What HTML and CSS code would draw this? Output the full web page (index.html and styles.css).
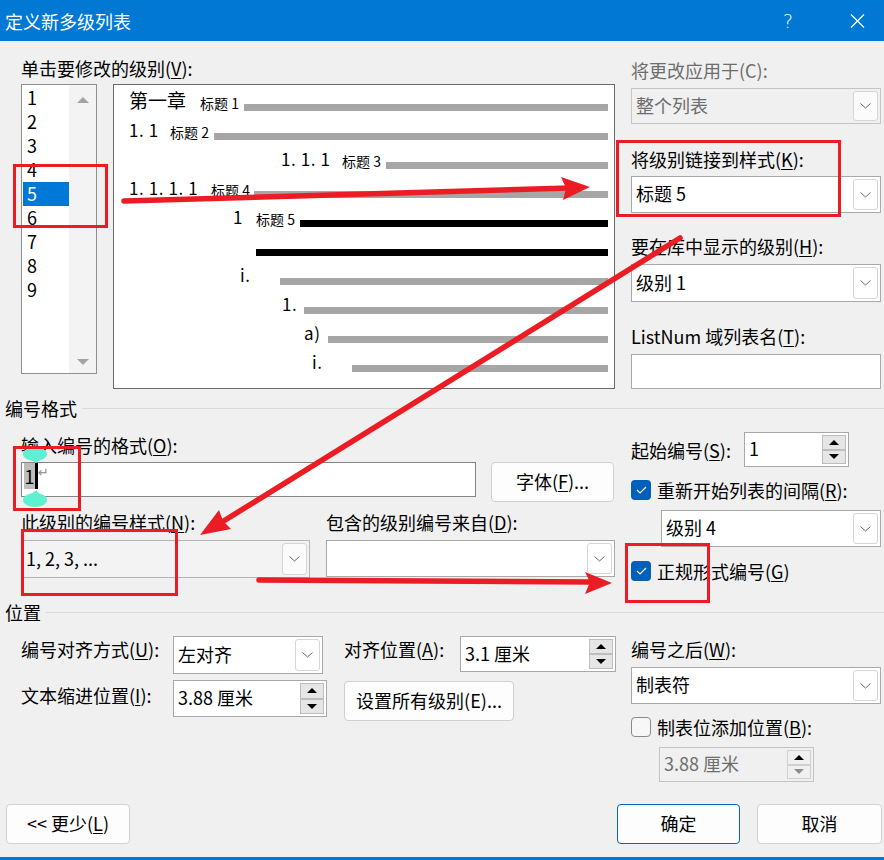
FILE: index.html
```html
<!DOCTYPE html>
<html lang="zh-CN">
<head>
<meta charset="utf-8">
<title>定义新多级列表</title>
<link rel="stylesheet" href="styles.css">
</head>
<body>
<div class="titlebar">
  <span class="t-title">定义新多级列表</span>
  <span class="t-help">?</span>
  <svg class="t-close" width="15" height="14" viewBox="0 0 15 14"><path d="M1 0.5 L14 13.5 M14 0.5 L1 13.5" stroke="#fff" stroke-width="1.2" fill="none"/></svg>
</div>

<div class="top">
  <div class="top-left">
    <div class="lbl lbl-levels">单击要修改的级别(<u>V</u>):</div>
    <div class="lists">
      <div class="levels">
        <div class="items">
          <div class="item">1</div>
          <div class="item">2</div>
          <div class="item">3</div>
          <div class="item">4</div>
          <div class="item sel">5</div>
          <div class="item">6</div>
          <div class="item">7</div>
          <div class="item">8</div>
          <div class="item">9</div>
        </div>
        <div class="vscroll"><span class="up"></span><span class="down"></span></div>
      </div>
      <div class="preview">
        <div class="prow r1"><span class="num big w1">第一章</span><span class="lab w44">标题 1</span><span class="bar"></span></div>
        <div class="prow r2"><span class="num w2">1. 1</span><span class="lab w44">标题 2</span><span class="bar"></span></div>
        <div class="prow r3"><span class="num w3">1. 1. 1</span><span class="lab w44">标题 3</span><span class="bar"></span></div>
        <div class="prow r4"><span class="num w4">1. 1. 1. 1</span><span class="lab w43">标题 4</span><span class="bar"></span></div>
        <div class="prow r5"><span class="num w5">1</span><span class="lab w44">标题 5</span><span class="bar dark"></span></div>
        <div class="prow r6"><span class="bar dark"></span></div>
        <div class="prow r7"><span class="num w7">i.</span><span class="bar"></span></div>
        <div class="prow r8"><span class="num w8">1.</span><span class="bar"></span></div>
        <div class="prow r9"><span class="num w9">a)</span><span class="bar"></span></div>
        <div class="prow r10"><span class="num w7">i.</span><span class="bar"></span></div>
      </div>
    </div>
  </div>
  <div class="top-right">
    <div class="lbl dis tr1">将更改应用于(C):</div>
    <div class="combo disabled tr2"><span class="v">整个列表</span><span class="dd"><svg width="11" height="6" viewBox="0 0 11 6"><path d="M0.5 0.5 L5.5 5 L10.5 0.5" fill="none" stroke="#666" stroke-width="1"/></svg></span></div>
    <div class="lbl tr3">将级别链接到样式(<u>K</u>):</div>
    <div class="combo tr4"><span class="v">标题 5</span><span class="dd"><svg width="11" height="6" viewBox="0 0 11 6"><path d="M0.5 0.5 L5.5 5 L10.5 0.5" fill="none" stroke="#666" stroke-width="1"/></svg></span></div>
    <div class="lbl tr5">要在库中显示的级别(<u>H</u>):</div>
    <div class="combo tr6"><span class="v">级别 1</span><span class="dd"><svg width="11" height="6" viewBox="0 0 11 6"><path d="M0.5 0.5 L5.5 5 L10.5 0.5" fill="none" stroke="#666" stroke-width="1"/></svg></span></div>
    <div class="lbl tr7">ListNum 域列表名(<u>T</u>):</div>
    <div class="textbox tr8"></div>
  </div>
</div>

<div class="sec"><span>编号格式</span></div>

<div class="fmt">
  <div class="fmt-left">
    <div class="lbl fl1">输入编号的格式(<u>O</u>):</div>
    <div class="row-input">
      <div class="fmtbox"><span class="hl">1</span><span class="caret"></span><span class="ret">↵</span></div>
      <div class="btn btn-font">字体(<u>F</u>)...</div>
    </div>
    <div class="row-labels">
      <div class="lbl lw">此级别的编号样式(<u>N</u>):</div>
      <div class="lbl">包含的级别编号来自(<u>D</u>):</div>
    </div>
    <div class="row-combos">
      <div class="combo plain c-style"><span class="v">1, 2, 3, ...</span><span class="dd"><svg width="11" height="6" viewBox="0 0 11 6"><path d="M0.5 0.5 L5.5 5 L10.5 0.5" fill="none" stroke="#666" stroke-width="1"/></svg></span></div>
      <div class="combo c-from"><span class="v"></span><span class="dd"><svg width="11" height="6" viewBox="0 0 11 6"><path d="M0.5 0.5 L5.5 5 L10.5 0.5" fill="none" stroke="#666" stroke-width="1"/></svg></span></div>
    </div>
  </div>
  <div class="fmt-right">
    <div class="startrow">
      <div class="lbl sl">起始编号(<u>S</u>):</div>
      <div class="spin sp-start"><span class="v">1</span><span class="arr"><span><i class="tu"></i></span><span><i class="td"></i></span></span></div>
    </div>
    <div class="cbrow cb1"><span class="cb"><svg width="11" height="8" viewBox="0 0 11 8"><path d="M1 4 L4 7 L10 1" fill="none" stroke="#fff" stroke-width="1.2"/></svg></span><span class="lbl">重新开始列表的间隔(<u>R</u>):</span></div>
    <div class="combo c-lvl"><span class="v">级别 4</span><span class="dd"><svg width="11" height="6" viewBox="0 0 11 6"><path d="M0.5 0.5 L5.5 5 L10.5 0.5" fill="none" stroke="#666" stroke-width="1"/></svg></span></div>
    <div class="cbrow cb2"><span class="cb"><svg width="11" height="8" viewBox="0 0 11 8"><path d="M1 4 L4 7 L10 1" fill="none" stroke="#fff" stroke-width="1.2"/></svg></span><span class="lbl">正规形式编号(<u>G</u>)</span></div>
  </div>
</div>

<div class="sec"><span>位置</span></div>

<div class="pos">
  <div class="pos-left">
    <div class="prow1">
      <div class="lbl plabel">编号对齐方式(<u>U</u>):</div>
      <div class="combo c-align"><span class="v">左对齐</span><span class="dd"><svg width="11" height="6" viewBox="0 0 11 6"><path d="M0.5 0.5 L5.5 5 L10.5 0.5" fill="none" stroke="#666" stroke-width="1"/></svg></span></div>
      <div class="lbl plabel2">对齐位置(<u>A</u>):</div>
      <div class="spin sp-at"><span class="v">3.1 厘米</span><span class="arr"><span><i class="tu"></i></span><span><i class="td"></i></span></span></div>
    </div>
    <div class="prow2">
      <div class="lbl plabel">文本缩进位置(<u>I</u>):</div>
      <div class="spin sp-indent"><span class="v">3.88 厘米</span><span class="arr"><span><i class="tu"></i></span><span><i class="td"></i></span></span></div>
      <div class="btn btn-all">设置所有级别(E)...</div>
    </div>
  </div>
  <div class="pos-right">
    <div class="lbl pr1">编号之后(<u>W</u>):</div>
    <div class="combo c-after"><span class="v">制表符</span><span class="dd"><svg width="11" height="6" viewBox="0 0 11 6"><path d="M0.5 0.5 L5.5 5 L10.5 0.5" fill="none" stroke="#666" stroke-width="1"/></svg></span></div>
    <div class="cbrow cb3"><span class="cb off"></span><span class="lbl">制表位添加位置(<u>B</u>):</span></div>
    <div class="spin disabled sp-tab"><span class="v">3.88 厘米</span><span class="arr"><span><i class="tu"></i></span><span><i class="td grey"></i></span></span></div>
  </div>
</div>

<div class="footer">
  <div class="btn btn-less">&lt;&lt; 更少(<u>L</u>)</div>
  <div class="spacer"></div>
  <div class="btn btn-ok">确定</div>
  <div class="btn btn-cancel">取消</div>
</div>
<div class="edge"></div>

<svg class="overlay" width="884" height="860" viewBox="0 0 884 860">
  <g fill="#5ef0d0">
    <ellipse cx="35" cy="454" rx="12" ry="7"/>
    <polygon points="27,457 43,457 36,463"/>
    <ellipse cx="35" cy="500" rx="12" ry="7"/>
    <polygon points="28,497 42,497 36,490"/>
  </g>
  <g fill="none" stroke="#ec1c24" stroke-width="3">
    <rect x="14.5" y="165.5" width="92" height="61"/>
    <rect x="617.5" y="141.5" width="222" height="74"/>
    <rect x="14.5" y="447.5" width="65" height="62"/>
    <rect x="22.5" y="530.5" width="154" height="64"/>
    <rect x="626.5" y="544.5" width="82" height="57"/>
  </g>
  <g stroke="#ec1c24" stroke-width="5.5" stroke-linecap="round">
    <line x1="124" y1="201" x2="570" y2="188"/>
    <line x1="680" y1="238" x2="222" y2="522"/>
    <line x1="259" y1="580" x2="592" y2="582"/>
  </g>
  <g fill="#ec1c24">
    <polygon points="590,187 561,177 566,188 563,200"/>
    <polygon points="200,535 219,510 223,521 231,529"/>
    <polygon points="612,583 585,572 590,582 585,594"/>
  </g>
</svg>
</body>
</html>
```

FILE: styles.css
```css
* { box-sizing: border-box; margin: 0; padding: 0; }
html, body { width: 884px; height: 860px; }
body {
  background: #f0f0f0;
  font-family: "Noto Sans CJK SC", "Noto Sans", sans-serif;
  font-size: 18px;
  color: #000;
  position: relative;
  overflow: hidden;
}
u { text-decoration: underline; text-underline-offset: 2px; text-decoration-thickness: 1px; }
i { display: block; }

/* title bar */
.titlebar { height: 41px; background: #0078d4; color: #fff; display: flex; align-items: center; }
.t-title { flex: 1; padding-left: 5px; font-size: 18px; line-height: 24px; }
.t-help { width: 20px; text-align: center; font-size: 19px; line-height: 24px; font-family: "DejaVu Sans", sans-serif; font-weight: 300; }
.t-close { margin-left: 52px; margin-right: 19px; }

.lbl { height: 20px; line-height: 20px; white-space: nowrap; }
.dis { color: #6d6d6d; }

/* top */
.top { display: flex; height: 357px; padding-left: 21px; }
.top-left { width: 610px; }
.lbl-levels { margin-top: 17px; }
.lists { display: flex; gap: 16px; margin-top: 6px; }
.levels { width: 76px; height: 290px; background: #fff; border: 1px solid #8f8f8f; display: flex; }
.items { width: 47px; padding: 1px 0 0 1px; }
.item { height: 24px; line-height: 23px; padding-left: 4px; font-size: 18px; }
.item.sel { background: #0078d7; color: #fff; }
.vscroll { flex: 1; background: #f3f3f3; display: flex; flex-direction: column; justify-content: space-between; align-items: center; padding: 12px 0 8px; }
.up { width: 0; height: 0; border-left: 6px solid transparent; border-right: 6px solid transparent; border-bottom: 6px solid #a3a3a3; }
.down { width: 0; height: 0; border-left: 6px solid transparent; border-right: 6px solid transparent; border-top: 6px solid #a3a3a3; }

.preview { width: 502px; height: 305px; background: #fff; border: 1px solid #6b6b6b; padding-right: 6px; }
.prow { display: flex; align-items: flex-start; height: 29px; }
.num { margin-top: 6px; line-height: 20px; font-size: 17px; letter-spacing: 0.6px; white-space: nowrap; flex: none; }
.num.big { font-size: 19px; margin-top: 5px; letter-spacing: 0; }
.lab { font-size: 14px; line-height: 14px; margin-top: 11px; flex: none; white-space: nowrap; }
.bar { flex: 1; height: 7px; margin-top: 19px; background: #a6a6a6; }
.bar.dark { background: #000; }
.r1, .r2, .r4 { padding-left: 15px; }
.r3 { padding-left: 167px; }
.r5 { padding-left: 119px; }
.r6 { padding-left: 142px; }
.r7 { padding-left: 126px; }
.r8 { padding-left: 168px; }
.r9 { padding-left: 190px; }
.r10 { padding-left: 198px; }
.w1 { width: 71px; }
.w2 { width: 41px; }
.w3 { width: 61px; }
.w4 { width: 82px; }
.w5 { width: 23px; }
.w7 { width: 40px; }
.w8 { width: 22px; }
.w9 { width: 24px; }
.w43 { width: 43px; }
.w44 { width: 44px; }

.top-right { width: 250px; }
.tr1 { margin-top: 19px; }
.tr2 { margin-top: 8px; height: 36px; }
.tr3 { margin-top: 25px; }
.tr4 { margin-top: 7px; height: 37px; }
.tr5 { margin-top: 23px; }
.tr6 { margin-top: 8px; height: 38px; }
.tr7 { margin-top: 24px; }
.tr8 { margin-top: 8px; height: 35px; }

/* controls */
.combo { display: flex; align-items: center; background: #fff; border: 1px solid #a9a9a9; }
.combo .v { flex: 1; padding-left: 4px; padding-bottom: 3px; line-height: 20px; white-space: nowrap; }
.combo .dd { width: 25px; align-self: stretch; margin: 2px 2px 2px 0; border: 1px solid #d5d5d5; border-radius: 3px; background: #fff; display: flex; align-items: center; justify-content: center; }
.combo.disabled { background: #f0f0f0; border-color: #c4c4c4; color: #6d6d6d; }
.combo.disabled .dd { background: #fbfbfb; }
.combo.plain { background: #f3f3f3; border-color: #b5b5b5; }
.combo.plain .dd { background: #fbfbfb; }
.textbox { background: #fff; border: 1px solid #a9a9a9; }

.spin { display: flex; background: #fff; border: 1px solid #a9a9a9; }
.spin .v { flex: 1; padding-left: 4px; padding-bottom: 3px; display: flex; align-items: center; white-space: nowrap; line-height: 20px; }
.spin .arr { width: 24px; margin: 2px 2px 2px 0; display: flex; flex-direction: column; }
.spin .arr > span { flex: 1; background: #e6e6e6; border: 1px solid #bdbdbd; display: flex; align-items: center; justify-content: center; }
.tu { width: 0; height: 0; border-left: 5px solid transparent; border-right: 5px solid transparent; border-bottom: 5px solid #000; }
.td { width: 0; height: 0; border-left: 5px solid transparent; border-right: 5px solid transparent; border-top: 5px solid #000; }
.td.grey { border-top-color: #8c8c8c; }
.spin.disabled { background: #f0f0f0; border-color: #c4c4c4; color: #6d6d6d; }
.spin.disabled .arr > span { background: #f0f0f0; border-color: #d0d0d0; }

.btn { background: #fdfdfd; border: 1px solid #d0d0d0; border-radius: 4px; display: flex; align-items: center; justify-content: center; line-height: 20px; padding-bottom: 2px; white-space: nowrap; }

.cbrow { display: flex; align-items: center; height: 20px; gap: 6px; }
.cb { width: 20px; height: 20px; border-radius: 4px; background: #005fb8; display: flex; align-items: center; justify-content: center; flex: none; }
.cb.off { background: #f7f7f7; border: 1px solid #8a8a8a; }

/* sections */
.sec { display: flex; align-items: center; height: 20px; padding-left: 5px; }
.sec span { line-height: 20px; white-space: nowrap; }
.sec::after { content: ""; flex: 1; height: 1px; background: #dadada; margin-left: 5px; }

.fmt { display: flex; height: 184px; padding-left: 21px; }
.fmt-left { width: 610px; }
.fl1 { margin-top: 17px; }
.row-input { display: flex; align-items: flex-start; gap: 15px; margin-top: 7px; }
.fmtbox { width: 455px; height: 35px; background: #fff; border: 1px solid #858585; display: flex; align-items: flex-start; padding: 0 0 0 2px; }
.hl { margin-top: 0; width: 11px; height: 26px; background: #bdbdbd; line-height: 26px; text-align: center; font-size: 18px; }
.caret { width: 3px; height: 26px; background: #000; }
.ret { font-family: "DejaVu Sans", sans-serif; font-size: 13px; line-height: 20px; color: #8a8a8a; margin-left: 0; }
.btn-font { width: 123px; height: 40px; }
.row-labels { display: flex; margin-top: 10px; }
.lw { width: 305px; }
.row-combos { display: flex; gap: 16px; margin-top: 8px; }
.c-style { width: 289px; height: 38px; }
.c-from { width: 289px; height: 37px; }

.fmt-right { width: 250px; }
.startrow { display: flex; align-items: center; height: 35px; margin-top: 14px; }
.sl { width: 113px; }
.sp-start { width: 105px; height: 35px; }
.cb1 { margin-top: 13px; }
.c-lvl { margin: 10px 0 0 30px; width: 220px; height: 37px; }
.cb2 { margin-top: 14px; }

.pos { display: flex; height: 182px; padding-left: 21px; }
.pos-left { width: 610px; }
.prow1 { display: flex; align-items: flex-start; margin-top: 14px; }
.plabel { width: 152px; margin-top: 3px; }
.c-align { width: 150px; height: 38px; }
.plabel2 { width: 116px; margin-left: 21px; margin-top: 3px; }
.sp-at { width: 156px; height: 36px; }
.prow2 { display: flex; align-items: flex-start; margin-top: 6px; }
.prow2 .plabel { margin-top: 5px; }
.sp-indent { width: 154px; height: 37px; }
.btn-all { width: 170px; height: 40px; margin-left: 17px; margin-top: 1px; }

.pos-right { width: 250px; }
.pr1 { margin-top: 17px; }
.c-after { margin-top: 8px; height: 37px; }
.cb3 { margin-top: 13px; }
.sp-tab { margin: 10px 0 0 28px; width: 155px; height: 35px; }

.footer { display: flex; height: 40px; padding: 0 2px 0 6px; }
.btn-less { width: 124px; }
.spacer { flex: 1; }
.btn-ok { width: 123px; border-color: #0067c0; }
.btn-cancel { width: 125px; margin-left: 17px; }
.edge { height: 3px; background: #0078d4; margin-top: 13px; }

.overlay { position: absolute; left: 0; top: 0; pointer-events: none; }
```
